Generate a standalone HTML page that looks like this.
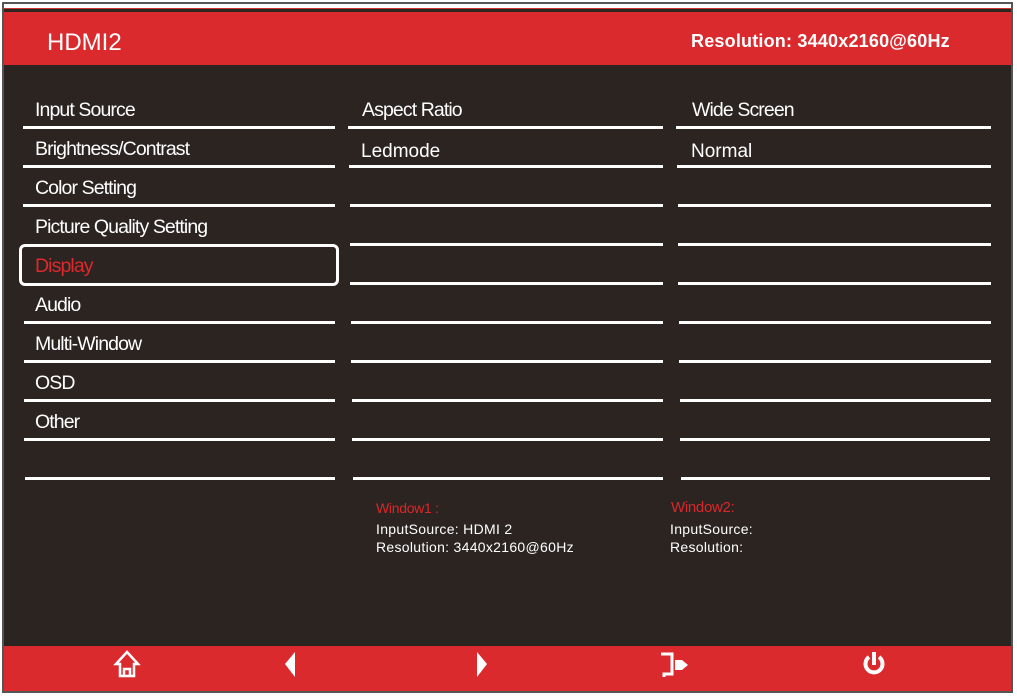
<!DOCTYPE html>
<html><head><style>
*{margin:0;padding:0;box-sizing:border-box}
body{width:1017px;height:698px;background:#fff;position:relative;overflow:hidden;font-family:"Liberation Sans",sans-serif}
.frame{position:absolute;left:2px;top:2px;width:1011px;height:691px;border:2px solid #555;background:#2b2421}
.topw{position:absolute;left:0;top:0;width:100%;height:5px;background:#fff;border-bottom:1px solid #c33}
.hdr{position:absolute;left:0;top:8px;width:100%;height:53px;background:#da2a2e}
.ftr{position:absolute;left:0;top:642px;width:100%;height:45px;background:#da2a2e}
.t{position:absolute;color:#fff;white-space:nowrap}
.it{font-size:19.5px;letter-spacing:-0.9px;line-height:22px}
.ln{position:absolute;height:3px;background:#fff}
.s{font-size:14px;line-height:18px;letter-spacing:0.3px}
</style></head><body>
<div class="frame">
<div class="topw"></div>
<div class="hdr"></div>
<div class="ftr"></div>
</div>
<div class="t" style="left:47px;top:29px;font-size:24px">HDMI2</div>
<div class="t" style="left:691px;top:31px;font-size:18px;font-weight:bold;letter-spacing:0.2px">Resolution: 3440x2160@60Hz</div>

<div class="t it" style="left:35px;top:99px">Input Source</div>
<div class="t it" style="left:35px;top:138px">Brightness/Contrast</div>
<div class="t it" style="left:35px;top:177px">Color Setting</div>
<div class="t it" style="left:35px;top:216px">Picture Quality Setting</div>
<div class="t it" style="left:35px;top:255px;color:#e0282c">Display</div>
<div class="t it" style="left:35px;top:294px">Audio</div>
<div class="t it" style="left:35px;top:333px">Multi-Window</div>
<div class="t it" style="left:35px;top:372px">OSD</div>
<div class="t it" style="left:35px;top:411px">Other</div>
<div class="t it" style="left:362px;top:99px">Aspect Ratio</div>
<div class="t it" style="left:692px;top:99px">Wide Screen</div>
<div class="t" style="left:361px;top:141px;font-size:19px">Ledmode</div>
<div class="t" style="left:691px;top:141px;font-size:19px">Normal</div>

<div style="position:absolute;left:19px;top:244px;width:320px;height:42px;border:3px solid #fff;border-radius:6px"></div>

<div class="ln" style="left:23px;top:126px;width:312px"></div>
<div class="ln" style="left:23px;top:165px;width:312px"></div>
<div class="ln" style="left:23px;top:204px;width:312px"></div>
<div class="ln" style="left:24px;top:321px;width:311px"></div>
<div class="ln" style="left:24px;top:360px;width:311px"></div>
<div class="ln" style="left:24px;top:399px;width:311px"></div>
<div class="ln" style="left:24px;top:438px;width:311px"></div>
<div class="ln" style="left:25px;top:477px;width:310px"></div>

<div class="ln" style="left:348px;top:126px;width:315px"></div>
<div class="ln" style="left:349px;top:165px;width:314px"></div>
<div class="ln" style="left:350px;top:204px;width:313px"></div>
<div class="ln" style="left:350px;top:243px;width:313px"></div>
<div class="ln" style="left:350px;top:282px;width:313px"></div>
<div class="ln" style="left:351px;top:321px;width:312px"></div>
<div class="ln" style="left:351px;top:360px;width:312px"></div>
<div class="ln" style="left:352px;top:399px;width:311px"></div>
<div class="ln" style="left:352px;top:438px;width:311px"></div>
<div class="ln" style="left:353px;top:477px;width:310px"></div>

<div class="ln" style="left:676px;top:126px;width:315px"></div>
<div class="ln" style="left:677px;top:165px;width:314px"></div>
<div class="ln" style="left:678px;top:204px;width:313px"></div>
<div class="ln" style="left:678px;top:243px;width:313px"></div>
<div class="ln" style="left:678px;top:282px;width:313px"></div>
<div class="ln" style="left:679px;top:321px;width:312px"></div>
<div class="ln" style="left:679px;top:360px;width:312px"></div>
<div class="ln" style="left:680px;top:399px;width:311px"></div>
<div class="ln" style="left:680px;top:438px;width:310px"></div>
<div class="ln" style="left:681px;top:477px;width:309px"></div>

<div class="t s" style="left:376px;top:499px;color:#d8282c;letter-spacing:-0.3px">Window1 :</div>
<div class="t s" style="left:376px;top:520px">InputSource: HDMI 2</div>
<div class="t s" style="left:376px;top:538px">Resolution: 3440x2160@60Hz</div>
<div class="t s" style="left:671px;top:499px;color:#d8282c;font-size:15px;letter-spacing:-0.3px">Window2:</div>
<div class="t s" style="left:670px;top:520px">InputSource:</div>
<div class="t s" style="left:670px;top:538px">Resolution:</div>

<svg style="position:absolute;left:0;top:644px" width="1017" height="46">
<g fill="none" stroke="#fff" stroke-width="2.5">
<path d="M127 8 L116 20 L120 20 L120 32 L134 32 L134 20 L138 20 Z"/>
<path d="M124 32 V25 H130 V32"/>
</g>
<path d="M295 8 L285 20 L295 33 Z" fill="#fff"/>
<path d="M477 8 L487 20 L477 33 Z" fill="#fff"/>
<g fill="none" stroke="#fff" stroke-width="3"><path d="M661 10 H672 V30 H664 V33"/></g>
<path d="M675 16 H682 L688 21 L682 26 H675 Z" fill="#fff"/>
<path d="M869 13 A8.5 8.5 0 1 0 879 13" fill="none" stroke="#fff" stroke-width="4"/>
<rect x="872" y="8" width="4" height="13" fill="#fff"/>
</svg>
</body></html>
